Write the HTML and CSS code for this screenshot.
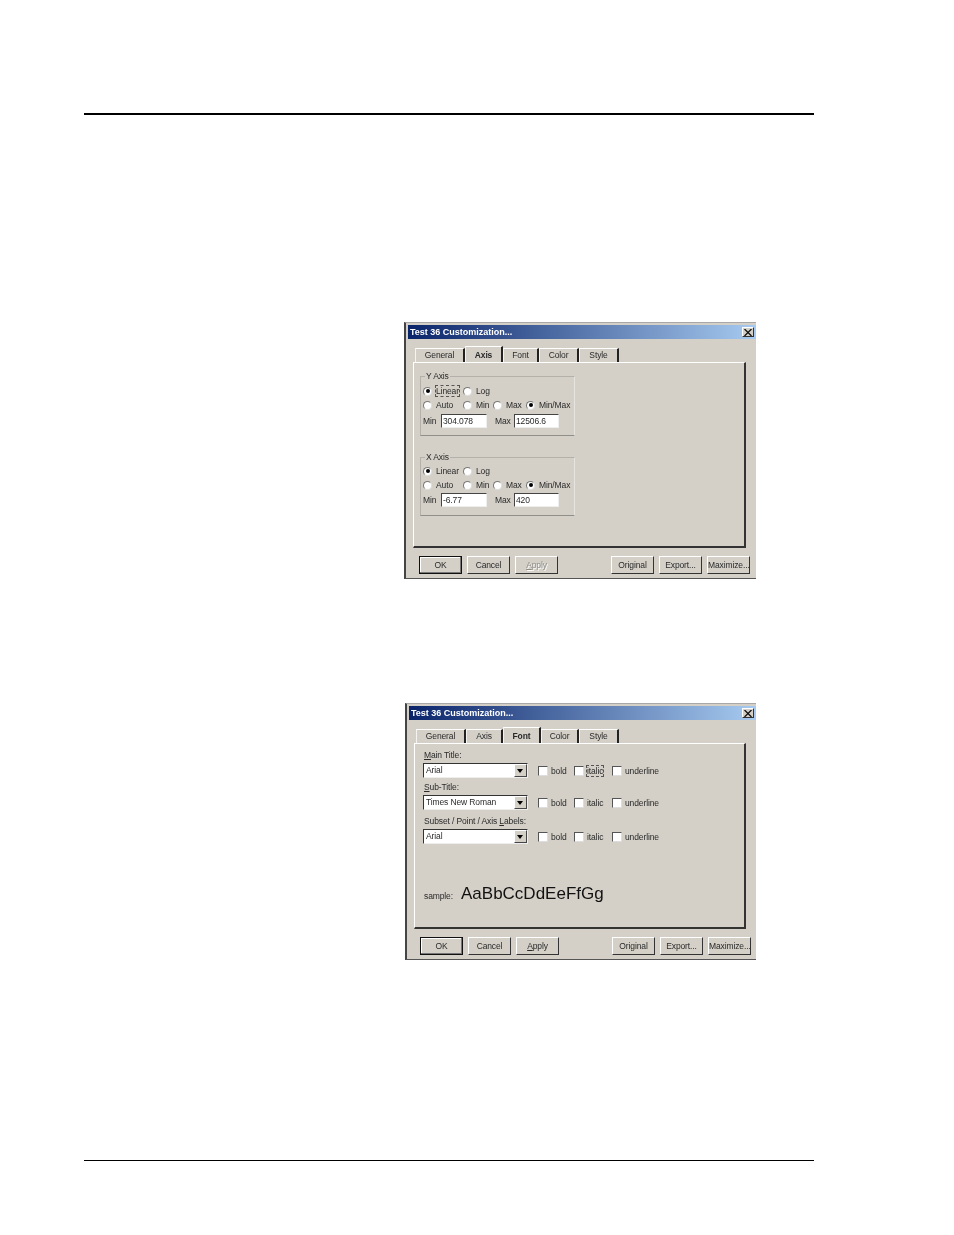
FILE: index.html
```html
<!DOCTYPE html>
<html lang="en">

<head>
    <meta charset="UTF-8">
    <title>Test 36 Customization</title>
    <link rel="stylesheet" href="styles.css">
</head>

<body>
    <div class="rule rule-top"></div>

    <!-- Axis tab dialog -->
    <div class="dialog dialog-axis">
        <div class="title-bar">
            <span class="title-text">Test 36 Customization...</span>
            <span class="close-btn">
                <svg width="8" height="7" viewBox="0 0 8 7"><path d="M0.5 0 L7.5 7 M7.5 0 L0.5 7" stroke="#111" stroke-width="1.3" fill="none"/></svg>
            </span>
        </div>
        <div class="tabs">
            <div class="tab tab-general">General</div>
            <div class="tab tab-axis active">Axis</div>
            <div class="tab tab-font">Font</div>
            <div class="tab tab-color">Color</div>
            <div class="tab tab-style">Style</div>
        </div>
        <div class="panel">
            <div class="group group-y">
                <span class="group-label">Y Axis</span>
                <div class="row">
                    <div class="option w-40"><span class="radio on"></span><span class="focus">Linear</span></div>
                    <div class="option"><span class="radio"></span><span>Log</span></div>
                </div>
                <div class="row">
                    <div class="option w-40"><span class="radio"></span><span>Auto</span></div>
                    <div class="option w-30"><span class="radio"></span><span>Min</span></div>
                    <div class="option w-33"><span class="radio"></span><span>Max</span></div>
                    <div class="option"><span class="radio on"></span><span>Min/Max</span></div>
                </div>
                <div class="row row-inputs">
                    <span class="min-label">Min</span><span class="text-input">304.078</span>
                    <span class="max-label">Max</span><span class="text-input">12506.6</span>
                </div>
            </div>
            <div class="group group-x">
                <span class="group-label">X Axis</span>
                <div class="row">
                    <div class="option w-40"><span class="radio on"></span><span>Linear</span></div>
                    <div class="option"><span class="radio"></span><span>Log</span></div>
                </div>
                <div class="row">
                    <div class="option w-40"><span class="radio"></span><span>Auto</span></div>
                    <div class="option w-30"><span class="radio"></span><span>Min</span></div>
                    <div class="option w-33"><span class="radio"></span><span>Max</span></div>
                    <div class="option"><span class="radio on"></span><span>Min/Max</span></div>
                </div>
                <div class="row row-inputs">
                    <span class="min-label">Min</span><span class="text-input">-6.77</span>
                    <span class="max-label">Max</span><span class="text-input">420</span>
                </div>
            </div>
        </div>
        <div class="buttons">
            <div class="btn default">OK</div>
            <div class="btn">Cancel</div>
            <div class="btn disabled"><u>A</u>pply</div>
            <div class="btn push-right">Original</div>
            <div class="btn">Export...</div>
            <div class="btn">Maximize...</div>
        </div>
    </div>

    <!-- Font tab dialog -->
    <div class="dialog dialog-font">
        <div class="title-bar">
            <span class="title-text">Test 36 Customization...</span>
            <span class="close-btn">
                <svg width="8" height="7" viewBox="0 0 8 7"><path d="M0.5 0 L7.5 7 M7.5 0 L0.5 7" stroke="#111" stroke-width="1.3" fill="none"/></svg>
            </span>
        </div>
        <div class="tabs">
            <div class="tab tab-general">General</div>
            <div class="tab tab-axis">Axis</div>
            <div class="tab tab-font active">Font</div>
            <div class="tab tab-color">Color</div>
            <div class="tab tab-style">Style</div>
        </div>
        <div class="panel">
            <div class="font-block">
                <div class="font-label"><u>M</u>ain Title:</div>
                <div class="font-row">
                    <div class="combo"><span class="combo-text">Arial</span><span class="combo-btn"></span></div>
                    <div class="check w-36"><span class="box"></span><span>bold</span></div>
                    <div class="check w-38"><span class="box"></span><span class="focus">italic</span></div>
                    <div class="check"><span class="box"></span><span>underline</span></div>
                </div>
            </div>
            <div class="font-block">
                <div class="font-label"><u>S</u>ub-Title:</div>
                <div class="font-row">
                    <div class="combo"><span class="combo-text">Times New Roman</span><span class="combo-btn"></span></div>
                    <div class="check w-36"><span class="box"></span><span>bold</span></div>
                    <div class="check w-38"><span class="box"></span><span>italic</span></div>
                    <div class="check"><span class="box"></span><span>underline</span></div>
                </div>
            </div>
            <div class="font-block">
                <div class="font-label">Subset / Point / Axis <u>L</u>abels:</div>
                <div class="font-row">
                    <div class="combo"><span class="combo-text">Arial</span><span class="combo-btn"></span></div>
                    <div class="check w-36"><span class="box"></span><span>bold</span></div>
                    <div class="check w-38"><span class="box"></span><span>italic</span></div>
                    <div class="check"><span class="box"></span><span>underline</span></div>
                </div>
            </div>
            <div class="sample">
                <span class="sample-label">sample:</span>
                <span class="sample-text">AaBbCcDdEeFfGg</span>
            </div>
        </div>
        <div class="buttons">
            <div class="btn default">OK</div>
            <div class="btn">Cancel</div>
            <div class="btn"><u>A</u>pply</div>
            <div class="btn push-right">Original</div>
            <div class="btn">Export...</div>
            <div class="btn">Maximize...</div>
        </div>
    </div>

    <div class="rule rule-bottom"></div>
</body>

</html>
```

FILE: styles.css
```css
body {
    margin: 0;
    padding: 113px 0 0;
    background-color: #fff;
    font-family: "Liberation Sans", Arial, sans-serif;
    font-size: 8.5px;
    letter-spacing: -0.12px;
    color: #2a2a2a;
}

/* Page rules */
.rule {
    margin-left: 84px;
    width: 730px;
    background-color: #000;
}

.rule-top {
    height: 2px;
}

.rule-bottom {
    height: 1px;
    margin-top: 200px;
}

/* Dialog window */
.dialog {
    box-sizing: border-box;
    width: 352px;
    height: 257px;
    padding-top: 2px;
    background-color: #d4d0c8;
    border-top: 1px solid #a8a8a8;
    border-left: 2px solid #444;
    border-bottom: 1px solid #555;
    filter: blur(0.3px);
}

.dialog-axis {
    margin: 207px 0 0 404px;
}

.dialog-font {
    width: 351px;
    margin: 124px 0 0 405px;
}

.title-bar {
    display: flex;
    align-items: center;
    justify-content: space-between;
    height: 14px;
    margin-left: 2px;
    padding: 0 2px;
    background: linear-gradient(to right, #0a246a, #a6caf0);
}

.title-text {
    color: #fff;
    font-weight: bold;
    font-size: 9px;
    letter-spacing: 0;
}

.close-btn {
    display: flex;
    align-items: center;
    justify-content: center;
    width: 12px;
    height: 10px;
    background-color: #d4d0c8;
    border: 1px solid;
    border-color: #fff #333 #333 #fff;
    box-sizing: border-box;
}

/* Tabs */
.tabs {
    display: flex;
    align-items: flex-end;
    height: 16px;
    margin: 7px 0 0 9px;
}

.tab {
    box-sizing: border-box;
    height: 14px;
    line-height: 13px;
    text-align: center;
    border-top: 1px solid #fff;
    border-left: 1px solid #f4f3ef;
    border-right: 2px solid #222;
}

.tab.active {
    height: 16px;
    line-height: 17px;
    font-weight: bold;
}

.dialog-axis .tab-general { width: 50px; }
.dialog-axis .tab-axis { width: 38px; }
.dialog-axis .tab-font { width: 36px; }
.dialog-axis .tab-color { width: 40px; }
.dialog-axis .tab-style { width: 40px; }

.dialog-font .tab-general { width: 50px; }
.dialog-font .tab-axis { width: 37px; }
.dialog-font .tab-font { width: 38px; }
.dialog-font .tab-color { width: 38px; }
.dialog-font .tab-style { width: 40px; }

.panel {
    box-sizing: border-box;
    width: 333px;
    height: 186px;
    margin-left: 7px;
    padding: 13px 0 0 6px;
    border-top: 1px solid #fff;
    border-left: 1px solid #fff;
    border-right: 2px solid #333;
    border-bottom: 2px solid #333;
}

.dialog-font .panel {
    width: 332px;
    padding: 5px 0 0 8px;
}

/* Axis groups */
.group {
    position: relative;
    box-sizing: border-box;
    width: 155px;
    padding-left: 2px;
    border: 1px solid #b4b1aa;
    border-right-color: #e6e4df;
    border-bottom-color: #918f89;
}

.group-y {
    height: 60px;
    padding-top: 7px;
}

.group-x {
    height: 59px;
    margin-top: 21px;
    padding-top: 6px;
}

.group-label {
    position: absolute;
    top: -6px;
    left: 4px;
    padding: 0 1px;
    line-height: 11px;
    background-color: #d4d0c8;
}

.row {
    display: flex;
    align-items: center;
    height: 14px;
}

.row-inputs {
    margin-top: 2px;
}

.group-x .row-inputs {
    margin-top: 1px;
}

.option,
.check {
    display: flex;
    align-items: center;
}

.w-30 { width: 30px; }
.w-33 { width: 33px; }
.w-36 { width: 36px; }
.w-38 { width: 38px; }
.w-40 { width: 40px; }

.radio {
    position: relative;
    box-sizing: border-box;
    flex: none;
    width: 9px;
    height: 9px;
    margin-right: 4px;
    border: 1px solid;
    border-color: #777 #ddd #ddd #777;
    border-radius: 50%;
    background-color: #fff;
}

.radio.on::after {
    content: "";
    position: absolute;
    top: 1.5px;
    left: 1.5px;
    width: 4px;
    height: 4px;
    border-radius: 50%;
    background-color: #000;
}

.focus {
    outline: 1px dashed #555;
    outline-offset: 0;
}

.min-label {
    width: 18px;
}

.max-label {
    width: 19px;
    margin-left: 8px;
}

.text-input {
    box-sizing: border-box;
    width: 46px;
    height: 14px;
    padding-left: 1px;
    line-height: 12px;
    background-color: #fff;
    border: 1px solid;
    border-color: #444 #eee #eee #444;
}

.text-input:last-child {
    width: 45px;
}

/* Bottom buttons */
.buttons {
    display: flex;
    gap: 5px;
    margin: 8px 0 0 13px;
    padding-right: 5px;
}

.btn {
    box-sizing: border-box;
    width: 43px;
    height: 18px;
    line-height: 16px;
    text-align: center;
    white-space: nowrap;
    background-color: #d4d0c8;
    border: 1px solid;
    border-color: #fff #333 #333 #fff;
}

.btn.default {
    border-color: #111;
    box-shadow: inset -1px -1px 0 #777, inset 1px 1px 0 #fff;
}

.btn.disabled {
    color: #8d8b85;
    text-shadow: 1px 1px 0 #fff;
}

.push-right {
    margin-left: 48px;
}

/* Font tab */
.font-block {
    margin-bottom: 3px;
}

.font-block:nth-child(2) {
    margin-bottom: 5px;
}

.font-label {
    height: 12px;
    line-height: 12px;
    margin: 0 0 2px 1px;
}

.font-row {
    display: flex;
    align-items: center;
    height: 15px;
}

.combo {
    display: flex;
    box-sizing: border-box;
    width: 105px;
    height: 15px;
    margin-right: 10px;
    background-color: #fff;
    border: 1px solid;
    border-color: #333 #eee #eee #333;
}

.combo-text {
    flex: 1;
    padding-left: 2px;
    line-height: 13px;
}

.combo-btn {
    position: relative;
    box-sizing: border-box;
    width: 13px;
    background-color: #d4d0c8;
    border: 1px solid;
    border-color: #fff #444 #444 #fff;
}

.combo-btn::after {
    content: "";
    position: absolute;
    top: 4px;
    left: 2px;
    border-top: 4px solid #000;
    border-left: 3.5px solid transparent;
    border-right: 3.5px solid transparent;
}

.box {
    box-sizing: border-box;
    flex: none;
    width: 10px;
    height: 10px;
    margin-right: 3px;
    background-color: #fff;
    border: 1px solid;
    border-color: #555 #ddd #ddd #555;
}

.sample {
    display: flex;
    align-items: baseline;
    margin: 40px 0 0 1px;
}

.sample-label {
    width: 37px;
}

.sample-text {
    font-size: 17px;
    letter-spacing: 0;
    color: #111;
}
```
